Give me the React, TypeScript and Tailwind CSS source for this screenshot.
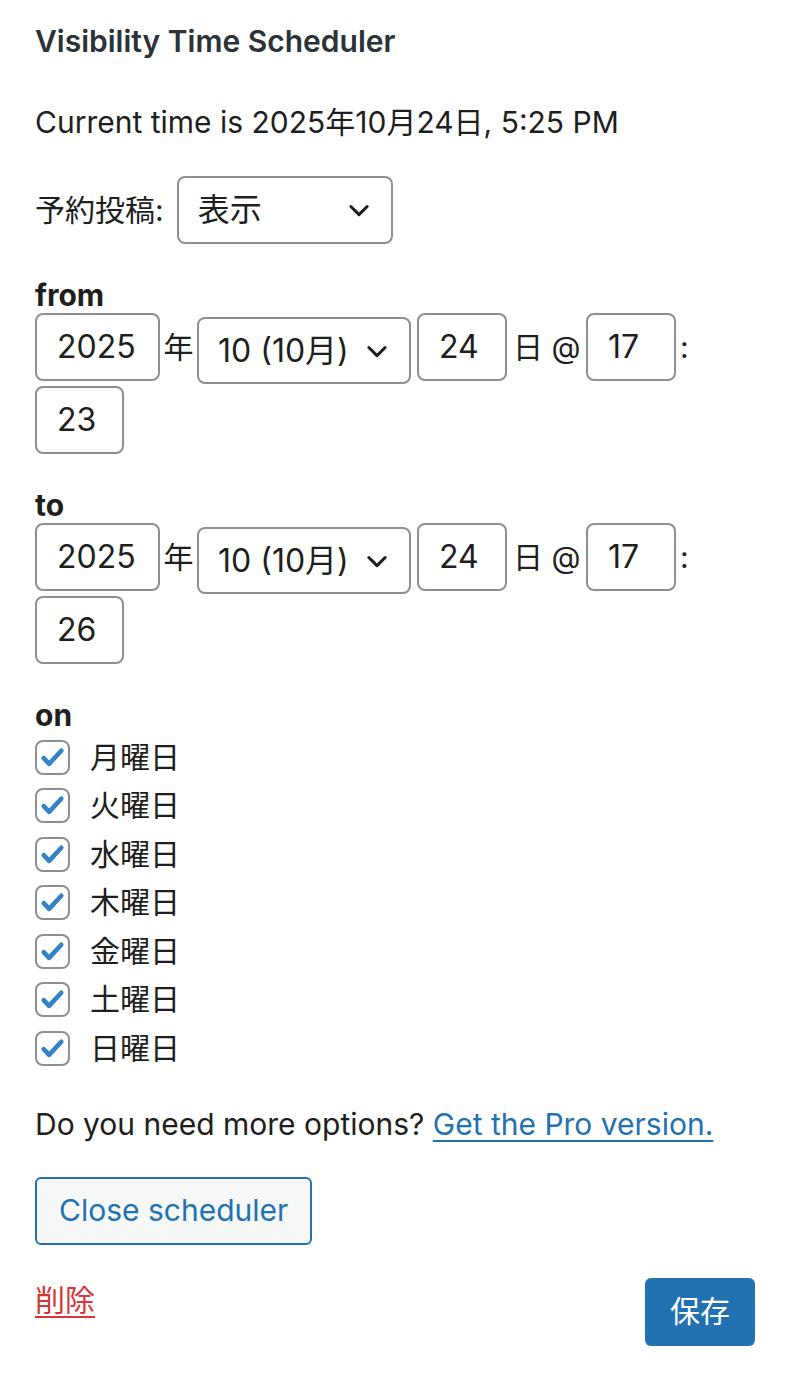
import React from 'react';

const FONT = { fontFamily: "Inter, 'Noto Sans CJK JP', sans-serif" };

function Chevron({ className = '' }: { className?: string }) {
  return (
    <svg viewBox="0 0 24 24" className={className} fill="none" stroke="#1e1e1e" strokeWidth="2.6" strokeLinecap="round" strokeLinejoin="round">
      <path d="M5 9l7 7 7-7" />
    </svg>
  );
}

function Field({ value, width }: { value: string; width: string }) {
  return (
    <div className={`${width} h-[68px] border-2 border-[#8c8f94] rounded-[8px] flex items-center pl-[20px] text-[32px] text-[#1e1e1e] bg-white`}>
      {value}
    </div>
  );
}

function DateRow({ minute }: { minute: string }) {
  return (
    <div className="flex flex-wrap items-start gap-y-[2px] w-[680px]">
      <Field value="2025" width="w-[125px]" />
      <span className="w-[37px] h-[68px] flex items-center justify-center text-[30px]">年</span>
      <div className="mt-[4px] w-[214px] h-[67px] border-2 border-[#8c8f94] rounded-[8px] flex items-center justify-between pl-[19px] pr-[18px] text-[32px] text-[#1e1e1e]">
        <span>10 (10月)</span>
        <Chevron className="w-[28px] h-[28px]" />
      </div>
      <span className="w-[6px]" />
      <Field value="24" width="w-[90px]" />
      <span className="w-[79px] h-[68px] flex items-center pl-[6px] text-[30px] whitespace-pre">日 @</span>
      <Field value="17" width="w-[90px]" />
      <span className="h-[68px] flex items-center pl-[4px] text-[30px]">:</span>
      <Field value={minute} width="w-[89px]" />
    </div>
  );
}

const days = ['月曜日', '火曜日', '水曜日', '木曜日', '金曜日', '土曜日', '日曜日'];

export default function App() {
  return (
    <div style={FONT} className="w-[790px] min-h-[1380px] bg-white px-[35px] pt-[23px] text-[#1e1e1e]">
      <h2 className="text-[30px] leading-[36px] font-semibold text-[#2c3338]">Visibility Time Scheduler</h2>

      <p className="mt-[45px] text-[30px] leading-[36px]">Current time is 2025年10月24日, 5:25 PM</p>

      <div className="mt-[36px] flex items-center gap-[13px]">
        <span className="text-[30px]">予約投稿:</span>
        <div className="w-[216px] h-[68px] border-2 border-[#8c8f94] rounded-[8px] flex items-center justify-between pl-[19px] pr-[18px] text-[32px]">
          <span>表示</span>
          <Chevron className="w-[28px] h-[28px]" />
        </div>
      </div>

      <div className="mt-[34px] text-[30px] leading-[34px] font-bold">from</div>
      <div className="mt-[1px]">
        <DateRow minute="23" />
      </div>

      <div className="mt-[34px] text-[30px] leading-[34px] font-bold">to</div>
      <div className="mt-[1px]">
        <DateRow minute="26" />
      </div>

      <div className="mt-[34px] text-[30px] leading-[34px] font-bold">on</div>
      <div className="mt-[1px] flex flex-col">
        {days.map((d) => (
          <label key={d} className="h-[48.5px] flex items-center gap-[20px]">
            <span className="w-[35px] h-[35px] border-2 border-[#8c8f94] rounded-[8px] flex items-center justify-center bg-white">
              <svg viewBox="0 0 20 20" className="w-[27px] h-[27px]">
                <path d="M3.5 10.5l4 4.2L16.5 5" fill="none" stroke="#3582c4" strokeWidth="3.4" strokeLinecap="round" strokeLinejoin="round" />
              </svg>
            </span>
            <span className="text-[30px]">{d}</span>
          </label>
        ))}
      </div>

      <p className="mt-[33px] text-[30px] leading-[36px]">
        Do you need more options?{' '}
        <a href="#" className="text-[#2271b1] underline underline-offset-[5px] decoration-2">Get the Pro version.</a>
      </p>

      <button className="mt-[35px] h-[68px] px-[22px] border-2 border-[#2271b1] rounded-[6px] bg-[#f6f7f7] text-[#2271b1] text-[30px]">
        Close scheduler
      </button>

      <div className="mt-[33px] flex justify-between items-start">
        <a href="#" className="mt-[4px] text-[30px] leading-[36px] text-[#d63638] underline underline-offset-[5px] decoration-2">削除</a>
        <button className="h-[68px] w-[110px] rounded-[6px] bg-[#2271b1] text-white text-[30px]">保存</button>
      </div>
    </div>
  );
}
